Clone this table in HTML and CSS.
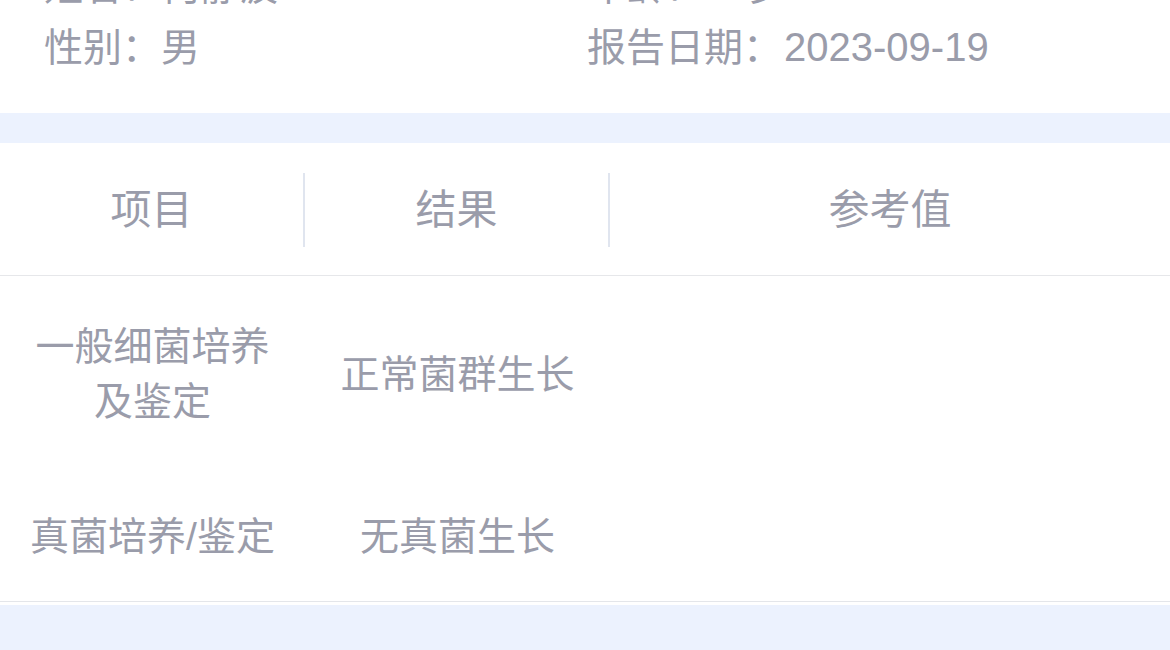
FILE: index.html
```html
<!DOCTYPE html>
<html lang="zh-CN">
<head>
<meta charset="utf-8">
<title>检验报告</title>
<link rel="stylesheet" href="styles.css">
</head>
<body>
<div class="page">
  <section class="info">
    <div class="info-item">姓名：何静波</div>
    <div class="info-item">年龄：35岁</div>
    <div class="info-item">性别：男</div>
    <div class="info-item">报告日期：<span class="num">2023-09-19</span></div>
  </section>
  <div class="band"></div>
  <section class="table">
    <div class="thead">
      <div class="th th-sep">项目</div>
      <div class="th th-sep">结果</div>
      <div class="th">参考值</div>
    </div>
    <div class="tbody">
      <div class="tr">
        <div class="td td-item">一般细菌培养<br>及鉴定</div>
        <div class="td">正常菌群生长</div>
        <div class="td"></div>
      </div>
      <div class="tr">
        <div class="td td-item">真菌培养/鉴定</div>
        <div class="td">无真菌生长</div>
        <div class="td"></div>
      </div>
    </div>
  </section>
  <div class="band band-bottom"></div>
</div>
</body>
</html>
```
FILE: styles.css
```css
* { box-sizing: border-box; }
html, body {
  margin: 0;
  padding: 0;
  background: #ecf2fe;
  overflow: hidden;
}
body {
  font-family: "Liberation Sans", "Noto Sans CJK SC", sans-serif;
  color: #9a9caa;
}
.page {
  width: 1170px;
  height: 650px;
  overflow: hidden;
}
.info {
  background: #ffffff;
  margin-top: -44px;
  padding: 0 0 35px 44px;
  display: grid;
  grid-template-columns: 543px 1fr;
  font-size: 39px;
  line-height: 61px;
}
.info-item { white-space: nowrap; }
.num {
  font-size: 40px;
  margin-left: 2px;
}
.band {
  height: 30px;
  background: #ecf2fe;
}
.table {
  background: #ffffff;
  border-bottom: 1px solid #e4e6ea;
}
.thead {
  display: grid;
  grid-template-columns: 305px 305px 1fr;
  padding: 30px 0 28px;
  border-bottom: 1px solid #e6e7ea;
  font-size: 41px;
}
.th {
  height: 74px;
  line-height: 74px;
  text-align: center;
}
.th-sep { border-right: 2px solid #e0e5ef; }
.tr {
  display: grid;
  grid-template-columns: 305px 305px 1fr;
  align-items: center;
  padding: 43px 0 37px;
}
.td {
  font-size: 39px;
  line-height: 55px;
  text-align: center;
  white-space: nowrap;
}
.band-bottom {
  border-top: 3px solid #ffffff;
  height: 60px;
}
```
